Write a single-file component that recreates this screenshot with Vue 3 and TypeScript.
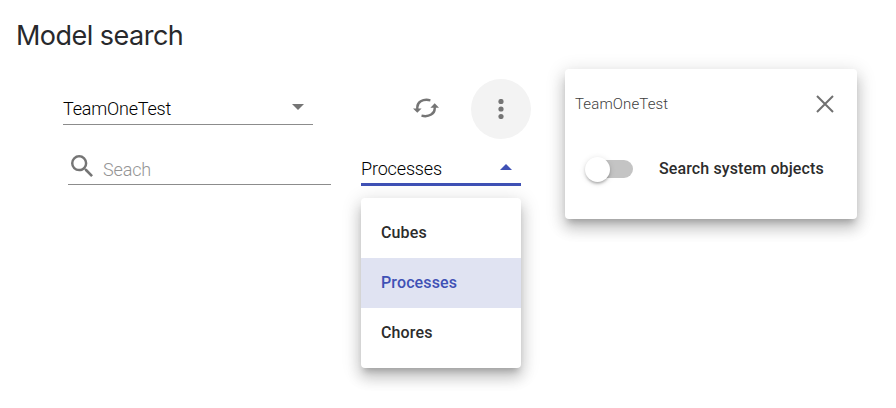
<script setup lang="ts">
import { ref } from 'vue'

const model = ref('TeamOneTest')
const query = ref('')
const options: string[] = ['Cubes', 'Processes', 'Chores']
const selected = ref('Processes')
const menuOpen = ref(true)
const panelOpen = ref(true)
const systemObjects = ref(false)

function choose(option: string): void {
  selected.value = option
}
</script>

<template>
  <main class="page">
    <h1 class="title">Model search</h1>
    <div class="content">
      <section class="controls">
        <div class="row top-row">
          <div class="field model-field">
            <span class="value">{{ model }}</span>
            <svg class="caret" width="12" height="6" viewBox="0 0 12 6"><path d="M0 0h12L6 6z" /></svg>
          </div>
          <button class="icon-button refresh" aria-label="Refresh">
            <svg width="26" height="20" viewBox="0 0 26 20">
              <g fill="none" stroke="currentColor" stroke-width="2.4">
                <path d="M4.3 11.2V9.2C4.3 4.6 9.2.4 17.4 2.3" />
                <path d="M21.7 8.5v2.2c0 4.5-5 8.9-13.2 7" />
              </g>
              <path d="M0 10.4h8.6l-4.3 4.4zM17.4 9.7H26l-4.3-4.5z" fill="currentColor" />
            </svg>
          </button>
          <button class="icon-button more" aria-label="More" @click="panelOpen = !panelOpen">
            <svg width="6" height="20" viewBox="0 0 6 20" fill="currentColor">
              <circle cx="3" cy="2.5" r="2.6" /><circle cx="3" cy="10" r="2.6" /><circle cx="3" cy="17.5" r="2.6" />
            </svg>
          </button>
        </div>
        <div class="row search-row">
          <label class="field search-field">
            <svg class="lens" width="22" height="22" viewBox="3 3 17.49 17.49">
              <path d="M15.5 14h-.79l-.28-.27A6.471 6.471 0 0 0 16 9.5 6.5 6.5 0 1 0 9.5 16c1.61 0 3.09-.59 4.23-1.57l.27.28v.79l5 4.99L20.49 19l-4.99-5zm-6 0C7.01 14 5 11.99 5 9.5S7.01 5 9.5 5 14 7.01 14 9.5 11.99 14 9.5 14z" />
            </svg>
            <input v-model="query" placeholder="Seach" />
          </label>
          <div class="select">
            <div class="field type-field" @click="menuOpen = !menuOpen">
              <span class="value">{{ selected }}</span>
              <svg class="caret" width="12" height="6" viewBox="0 0 12 6"><path d="M0 6h12L6 0z" /></svg>
            </div>
            <ul v-if="menuOpen" class="menu">
              <li v-for="option in options" :key="option" :class="{ active: option === selected }" @click="choose(option)">
                {{ option }}
              </li>
            </ul>
          </div>
        </div>
      </section>
      <aside v-if="panelOpen" class="panel">
        <header class="panel-head">
          <span>{{ model }}</span>
          <button class="close" aria-label="Close" @click="panelOpen = false">
            <svg width="18" height="18" viewBox="0 0 18 18"><path d="M1 1l16 16M17 1L1 17" /></svg>
          </button>
        </header>
        <div class="setting">
          <button class="switch" :class="{ on: systemObjects }" role="switch" :aria-checked="systemObjects" @click="systemObjects = !systemObjects">
            <span class="thumb"></span>
          </button>
          <span class="setting-label">Search system objects</span>
        </div>
      </aside>
    </div>
  </main>
</template>

<style>
body { background: #fff; }
</style>

<style scoped>
.page {
  box-sizing: border-box;
  width: 896px;
  height: 408px;
  padding: 16px 0 0 16px;
  overflow: hidden;
  font-family: Roboto, sans-serif;
  color: #2c2c2c;
}
button {
  padding: 0;
  border: 0;
  background: none;
}
svg { display: block; }
.title {
  height: 40px;
  margin: 0;
  font: 400 27px/40px Inter, sans-serif;
  letter-spacing: -0.52px;
  color: #28292c;
}
.content {
  display: flex;
  align-items: flex-start;
  padding: 13px 0 0 47px;
}
.controls {
  width: 468px;
  margin-right: 34px;
  padding-top: 10px;
}
.row { display: flex; }
.top-row { height: 60px; }
.field {
  box-sizing: border-box;
  display: flex;
  align-items: center;
  border-bottom: 1px solid #8c8c8c;
  font-size: 18px;
  font-weight: 300;
  letter-spacing: -0.15px;
}
.value {
  flex: 1;
  color: #000;
}
.caret { fill: #757575; }
.model-field {
  width: 250px;
  height: 34px;
  margin-top: 12px;
  padding: 0 9px 0 0;
  letter-spacing: -0.2px;
}
.model-field .value { padding-top: 2px; }
.model-field .caret { margin-top: -1px; }
.icon-button {
  display: flex;
  align-items: center;
  justify-content: center;
  color: #757575;
}
.refresh {
  width: 26px;
  height: 58px;
  margin-left: 100px;
}
.more {
  width: 60px;
  height: 60px;
  margin-left: 32px;
  border-radius: 50%;
  background: #f3f3f3;
}
.search-row {
  padding: 12px 0 0 5px;
}
.search-field {
  width: 263px;
  height: 34px;
}
.lens {
  margin: -4px 10px 0 3px;
  fill: #757575;
}
.search-field input {
  width: 200px;
  padding: 4px 0 0;
  border: 0;
  outline: 0;
  background: none;
  font: inherit;
  letter-spacing: inherit;
}
.search-field input::placeholder { color: #949494; opacity: 1; }
.select {
  position: relative;
  margin-left: 30px;
}
.type-field {
  width: 160px;
  height: 35px;
  padding: 2px 9px 0 0;
  border-bottom: 3px solid #3f51b5;
}
.type-field .caret {
  margin-top: -2px;
  fill: #3f51b5;
}
.menu {
  position: absolute;
  top: 47px;
  left: 0;
  box-sizing: border-box;
  width: 160px;
  height: 170px;
  margin: 0;
  padding: 10px 0;
  border-radius: 4px;
  background: #fff;
  list-style: none;
}
.menu,
.panel {
  box-shadow: 0 6px 6px -3px rgba(0, 0, 0, 0.2), 0 10px 14px 1px rgba(0, 0, 0, 0.14), 0 4px 18px 3px rgba(0, 0, 0, 0.12);
}
.menu li {
  padding-left: 20px;
  font-size: 16px;
  font-weight: 500;
  line-height: 50px;
  letter-spacing: 0.13px;
}
.menu .active {
  background: #e0e3f2;
  color: #3f51b5;
}
.panel {
  box-sizing: border-box;
  width: 292px;
  height: 150px;
  border-radius: 4px;
  background: #fff;
}
.panel-head {
  display: flex;
  align-items: center;
  justify-content: space-between;
  height: 70px;
  padding: 0 23px 0 10px;
  font-size: 15px;
  font-weight: 300;
  letter-spacing: 0.12px;
  color: #404040;
}
.close path {
  fill: none;
  stroke: #707070;
  stroke-width: 2;
}
.setting {
  display: flex;
  align-items: center;
  height: 60px;
  padding-left: 24px;
}
.switch {
  display: flex;
  align-items: center;
  width: 44px;
  height: 18px;
  border-radius: 9px;
  background: #c4c4c4;
}
.thumb {
  flex: none;
  width: 25px;
  height: 25px;
  margin-left: -4px;
  border-radius: 50%;
  background: #fff;
  box-shadow: 0 3px 3px -2px rgba(0, 0, 0, 0.2), 0 2px 3px rgba(0, 0, 0, 0.14), 0 1px 6px rgba(0, 0, 0, 0.12);
}
.switch.on { justify-content: flex-end; }
.setting-label {
  margin: -2px 0 0 26px;
  font-size: 16px;
  font-weight: 500;
  letter-spacing: 0.12px;
  white-space: nowrap;
}
</style>
